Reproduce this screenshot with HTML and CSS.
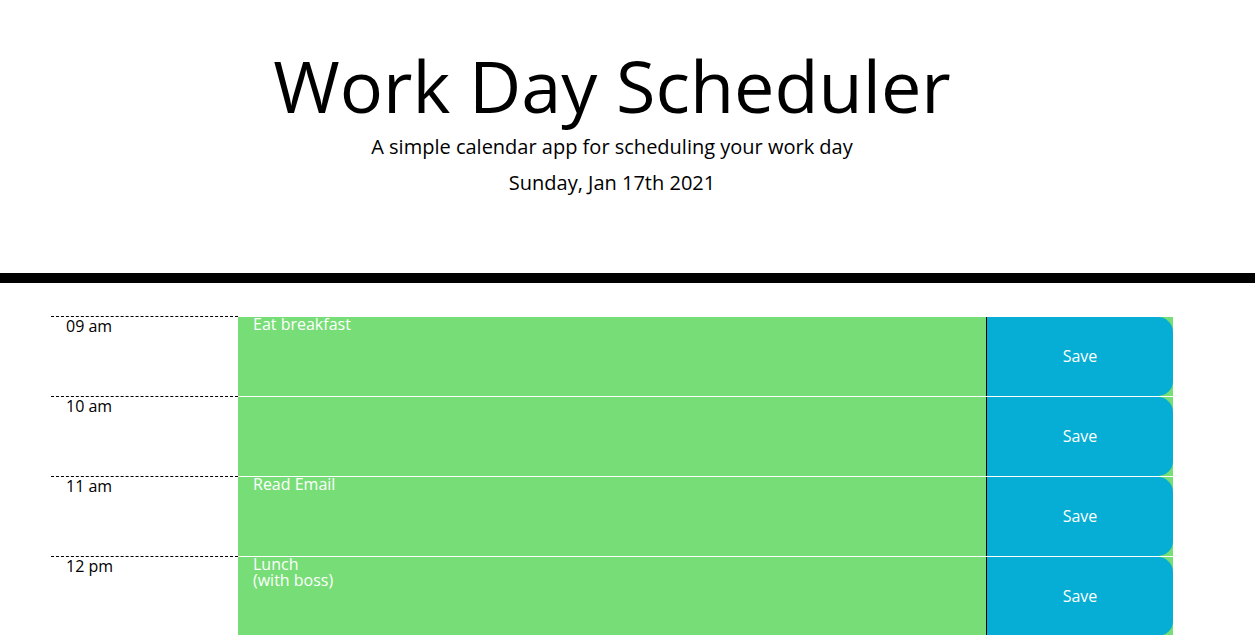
FILE: index.html
```html
<!DOCTYPE html>
<html lang="en">
<head>
<meta charset="utf-8">
<title>Work Day Scheduler</title>
<link rel="stylesheet" href="styles.css">
</head>
<body>
<header class="jumbotron">
  <div class="jumbo-inner">
    <h1 class="title">Work Day Scheduler</h1>
    <p class="lead">A simple calendar app for scheduling your work day</p>
    <p class="lead date">Sunday, Jan 17th 2021</p>
  </div>
</header>
<main class="schedule">
  <div class="time-block">
    <div class="hour">09 am</div>
    <div class="slot future">
      <textarea class="description">Eat breakfast</textarea>
      <button class="save-btn">Save</button>
    </div>
  </div>
  <div class="time-block">
    <div class="hour">10 am</div>
    <div class="slot future">
      <textarea class="description"></textarea>
      <button class="save-btn">Save</button>
    </div>
  </div>
  <div class="time-block">
    <div class="hour">11 am</div>
    <div class="slot future">
      <textarea class="description">Read Email</textarea>
      <button class="save-btn">Save</button>
    </div>
  </div>
  <div class="time-block">
    <div class="hour">12 pm</div>
    <div class="slot future">
      <textarea class="description">Lunch
(with boss)</textarea>
      <button class="save-btn">Save</button>
    </div>
  </div>
  <div class="time-block">
    <div class="hour">01 pm</div>
    <div class="slot future">
      <textarea class="description"></textarea>
      <button class="save-btn">Save</button>
    </div>
  </div>
  <div class="time-block">
    <div class="hour">02 pm</div>
    <div class="slot future">
      <textarea class="description"></textarea>
      <button class="save-btn">Save</button>
    </div>
  </div>
  <div class="time-block">
    <div class="hour">03 pm</div>
    <div class="slot future">
      <textarea class="description"></textarea>
      <button class="save-btn">Save</button>
    </div>
  </div>
  <div class="time-block">
    <div class="hour">04 pm</div>
    <div class="slot future">
      <textarea class="description"></textarea>
      <button class="save-btn">Save</button>
    </div>
  </div>
  <div class="time-block">
    <div class="hour">05 pm</div>
    <div class="slot future">
      <textarea class="description"></textarea>
      <button class="save-btn">Save</button>
    </div>
  </div>
</main>
</body>
</html>
```
FILE: styles.css
```css
* {
  box-sizing: border-box;
}

body {
  margin: 0;
  font-family: "Open Sans", "Liberation Sans", sans-serif;
  color: #000;
  background: #fff;
}

.jumbotron {
  padding: 42px 0 75px;
  border-bottom: 10px solid #000;
}

.jumbo-inner {
  width: 1224px;
  text-align: center;
}

.title {
  margin: 0;
  font-size: 72px;
  font-weight: 400;
  line-height: 86px;
}

.lead {
  margin: 4px 0 0;
  font-size: 20px;
  line-height: 30px;
}

.date {
  margin-top: 6px;
}

.schedule {
  padding: 33px 0 0 51px;
}

.time-block {
  display: flex;
  width: 1122px;
  height: 80px;
}

.hour {
  flex: 0 0 187px;
  padding: 0 15px;
  border-top: 1px dashed #000;
  background: #fff;
  font-size: 16px;
  line-height: 19px;
}

.slot {
  flex: 1;
  display: flex;
  border-top: 1px solid #fff;
}

.future {
  background: #77dd77;
}

.description {
  flex: 1;
  margin: -1px 0 0;
  padding: 0 15px;
  border: none;
  background: transparent;
  color: #fff;
  font-family: "Open Sans", "Liberation Sans", sans-serif;
  font-size: 16px;
  line-height: 16px;
  resize: none;
  outline: none;
}

.save-btn {
  flex: 0 0 187px;
  margin: 0;
  padding: 0 0 2px;
  border: none;
  border-left: 1px solid #000;
  border-radius: 0 15px 15px 0;
  background: #06aed5;
  color: #fff;
  font-family: "Open Sans", "Liberation Sans", sans-serif;
  font-size: 16px;
  cursor: pointer;
}
```
